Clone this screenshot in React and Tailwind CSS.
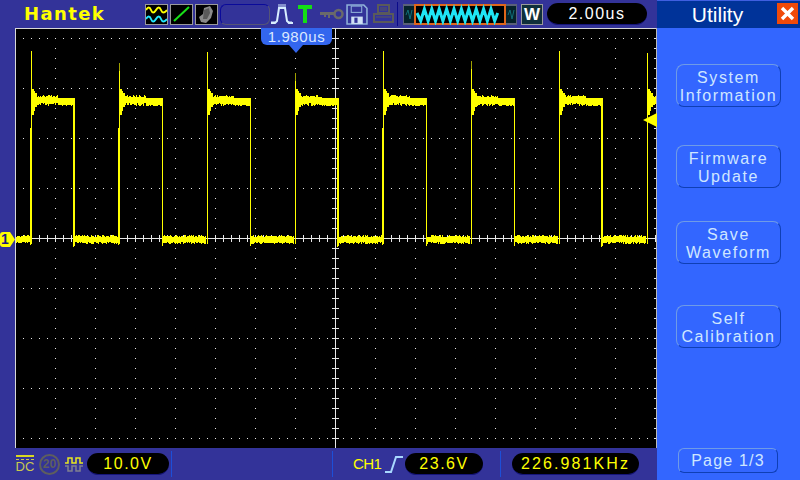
import React from 'react';

const seed = (n) => {
  const s = Math.sin(n * 12.9898) * 43758.5453;
  return s - Math.floor(s);
};

const rises = [31, 119, 207, 295, 383, 471, 559, 647];
const spikeTops = [51, 63, 52, 73, 51, 61, 51, 53];

const Graticule = () => {
  const dots = [];
  for (let y = 38; y < 448; y += 50) {
    for (let x = 23; x < 656; x += 8) dots.push(<rect key={`h${x}-${y}`} x={x} y={y} width="1" height="1" fill="#e8e8e8" />);
  }
  for (let x = 55; x < 656; x += 40) {
    for (let y = 48; y < 448; y += 10) dots.push(<rect key={`v${x}-${y}`} x={x} y={y} width="1" height="1" fill="#e8e8e8" />);
  }
  for (let y = 38; y < 448; y += 10) {
    dots.push(<rect key={`t${y}`} x="332" y={y} width="7" height="1" fill="#e8e8e8" />);
    dots.push(<rect key={`r${y}`} x="654" y={y} width="2" height="1" fill="#e8e8e8" />);
  }
  for (let x = 23; x < 656; x += 8) {
    dots.push(<rect key={`c${x}`} x={x} y="235" width="1" height="7" fill="#e8e8e8" />);
  }
  return (
    <>
      {dots}
      <rect x="16" y="238" width="640" height="1" fill="#e8e8e8" />
      <rect x="335" y="28" width="1" height="420" fill="#e8e8e8" />
    </>
  );
};

const Trace = () => {
  const cols = [];
  const col = (x, top, bottom, fill = '#ffff00') =>
    cols.push(<rect key={cols.length} x={x} y={top} width="1" height={bottom - top} fill={fill} />);

  // low level before the first edge
  for (let x = 16; x < 31; x++) col(x, 235 + Math.round(seed(x) * 2), 242 + Math.round(seed(x + 50) * 2));

  rises.forEach((r, i) => {
    col(r, spikeTops[i], 244);
    if (i === 0 || i === 1 || i === 4) col(r - 1, 128, 245);
    if (spikeTops[i] > 60) col(r, spikeTops[i], spikeTops[i] + 8, '#a0a000');
    const f = r + 43;
    const last = Math.min(f, 656);
    for (let x = r + 1; x < last; x++) {
      const d = x - r;
      let top = 95 + Math.round(seed(x) * 2);
      let bottom = 103 + Math.round(seed(x + 7) * 3);
      if (d < 3) { top = 89; bottom = 115; }
      else if (d < 4) { top = 91; bottom = 111; }
      else if (d < 6) { top = 93; bottom = 107; }
      else if (d > 26) { top = 98; bottom = 105 + Math.round(seed(x)); }
      col(x, top, bottom);
    }
    if (f < 656) {
      col(f, 98, 246);
      if (i % 3 === 0) col(f - 1, 98, 247);
      const next = rises[i + 1];
      for (let x = f + 1; x < next - 1; x++) {
        col(x, 235 + Math.round(seed(x) * 2), 242 + Math.round(seed(x + 3) * 2));
      }
    }
  });
  return <>{cols}</>;
};

const SoftKey = ({ top, bottom, className }) => (
  <button className={`w-[105px] h-[43px] ml-[19px] pt-[3px] flex flex-col items-center justify-center rounded-lg border border-t-[#6f9be6] border-l-[#6f9be6] border-r-[#0f3fb5] border-b-[#0f3fb5] text-[#cfe6ff] text-[16px] leading-[18px] tracking-[1.6px] font-['Liberation_Sans',sans-serif] ${className}`}>
    <span>{top}</span>
    <span>{bottom}</span>
  </button>
);

const Pill = ({ className, children }) => (
  <div className={`h-[22px] bg-black rounded-full flex items-center justify-center text-[16px] tracking-[1.5px] font-['Liberation_Sans',sans-serif] border-b border-[#15157a] ${className}`}>
    {children}
  </div>
);

const IconBox = ({ children }) => (
  <svg width="23" height="21" viewBox="0 0 21 19" className="bg-black border border-[#9a9a9a] mr-[2px]">{children}</svg>
);

const TopBar = () => (
  <div className="h-[28px] flex items-center">
    <div className="w-[130px] pl-[9px] text-[#ffff00] text-[18px] leading-none font-bold tracking-[1.4px] font-['DejaVu_Sans',sans-serif]">Hantek</div>
    <div className="flex items-center">
      <IconBox>
        <path d="M0 5q3-5 5 0t5 0 5 0 6 0" fill="none" stroke="#ffff00" strokeWidth="2" />
        <path d="M0 14q3-5 5 0t5 0 5 0 6 0" fill="none" stroke="#22e6ff" strokeWidth="2" />
      </IconBox>
      <IconBox>
        <path d="M3 16L18 2" stroke="#18e018" strokeWidth="2" />
      </IconBox>
      <IconBox>
        <path d="M3 12l4-3 1-6 6-2 3 5-2 7-5 5-5-1z" fill="#8a8a8a" />
        <path d="M8 5l5-2 1 5-3 6-4 0z" fill="#5a5a5a" />
      </IconBox>
    </div>
    <div className="w-[50px] h-[21px] rounded-md border border-t-[#0a0a9a] border-l-[#0a0a9a] border-r-[#555577] border-b-[#555577]" />
    <svg width="22" height="22" viewBox="0 0 22 22" className="ml-px">
      <path d="M0 20h4l2-2 2-13h6l2 13 2 2h4" fill="none" stroke="#d8eeff" strokeWidth="2" />
      <path d="M8 1v4M10 1v4M12 1v4M14 1v4M1 18v3M3 18v3M18 18v3M20 18v3" stroke="#d8eeff" strokeWidth="1" />
    </svg>
    <svg width="14" height="20" viewBox="0 0 14 20" className="ml-[5px]">
      <path d="M0 1h14v4H9v14H5V5H0z" fill="#14e014" />
    </svg>
    <svg width="24" height="12" viewBox="0 0 24 12" className="ml-[8px]">
      <circle cx="18.5" cy="6" r="4" fill="none" stroke="#6a6a6a" strokeWidth="2.5" />
      <path d="M0 4h15v3H10v3H8V7H6v2H4V7H0z" fill="#6a6a6a" />
    </svg>
    <svg width="22" height="21" viewBox="0 0 21 20" className="ml-[2px]">
      <path d="M1 1h16l3 3v15H1z" fill="none" stroke="#8fb0d8" strokeWidth="1.5" />
      <rect x="5" y="2" width="10" height="6" fill="#333399" stroke="#8fb0d8" />
      <rect x="5" y="12" width="11" height="7" fill="#cfe0f5" />
      <rect x="8" y="13" width="3" height="5" fill="#333399" />
    </svg>
    <svg width="23" height="20" viewBox="0 0 21 20" className="ml-[4px]">
      <path d="M5 1h11v8H5z" fill="none" stroke="#5a5a5a" strokeWidth="2" />
      <path d="M7 4h7M7 6h7" stroke="#5a5a5a" />
      <path d="M1 10h19v8H1z" fill="none" stroke="#5a5a5a" strokeWidth="2" />
      <path d="M3 13h15" stroke="#5a5a5a" />
    </svg>
    <div className="w-px h-[24px] ml-[2px] bg-[#0a0a8a]" />
    <div className="ml-[5px] h-[21px] w-[114px] flex items-center bg-[#5a6078]">
      <svg width="114" height="21" viewBox="0 0 114 21">
        <rect x="1" y="2" width="112" height="17" fill="#06222a" />
        <path d="M3 11l2-5 2 9 2-9" fill="none" stroke="#0f6f78" />
        <path d="M105 11l2-5 2 9 2-9" fill="none" stroke="#0f6f78" />
        <rect x="12" y="1" width="90" height="19" fill="#000" stroke="#e0661a" strokeWidth="2" />
        <path d="M14 9l3.7 8 3.7-12 3.7 12 3.7-12 3.7 12 3.7-12 3.7 12 3.7-12 3.7 12 3.7-12 3.7 12 3.7-12 3.7 12 3.7-12 3.7 12 3.7-12 3.7 12 3.7-12 3.7 12 3.7-12 3.7 12 3-8" fill="none" stroke="#1fe6f5" strokeWidth="3" />
      </svg>
    </div>
    <div className="ml-[4px] w-[22px] h-[21px] bg-[#10303a] border border-[#9a9a9a] flex items-center justify-center text-white text-[17px] font-bold leading-none font-['Liberation_Sans',sans-serif]">W</div>
    <Pill className="ml-[4px] w-[100px] text-white">2.00us</Pill>
  </div>
);

const BottomBar = () => (
  <div className="h-[32px] flex items-center text-[#ffff00]">
    <div className="w-[18px] ml-px flex flex-col items-center">
      <div className="w-full h-[2px] bg-[#d8d820]" />
      <div className="w-full h-px mt-[2px] border-t border-dashed border-[#c8c850]" />
      <span className="text-[13px] leading-[13px] text-[#c8c850] font-['Liberation_Sans',sans-serif]">DC</span>
    </div>
    <div className="ml-[5px] w-[21px] h-[21px] rounded-full border-2 border-[#5e5e5e] flex items-center justify-center text-[#5e5e5e] text-[12px] font-bold leading-none font-['Liberation_Sans',sans-serif]">20</div>
    <svg width="18" height="17" viewBox="0 0 18 17" className="ml-[5px]">
      <path d="M0 7h3V2h4v5h4V2h4v5h3" fill="none" stroke="#e8e820" strokeWidth="1.5" />
      <path d="M0 10h3v5h4v-5h4v5h4v-5h3" fill="none" stroke="#808090" strokeWidth="1.5" />
    </svg>
    <Pill className="ml-[4px] w-[82px]">10.0V</Pill>
    <div className="w-px h-[26px] ml-[2px] bg-[#1d4fd8]" />
    <div className="w-px h-[26px] ml-[160px] bg-[#1d4fd8]" />
    <span className="ml-[20px] w-[28px] text-[15px] tracking-[-0.6px] font-['Liberation_Sans',sans-serif]">CH1</span>
    <svg width="18" height="20" viewBox="0 0 18 20" className="ml-[4px]">
      <path d="M0 18h6l5-15h7" fill="none" stroke="#a8d8ff" strokeWidth="2" />
    </svg>
    <Pill className="ml-[2px] w-[78px]">23.6V</Pill>
    <div className="w-px h-[26px] ml-[17px] bg-[#1d4fd8]" />
    <Pill className="ml-[11px] w-[127px] tracking-[2.1px]">226.981KHz</Pill>
  </div>
);

export default function App() {
  return (
    <div className="w-[800px] h-[480px] flex bg-[#333399] overflow-hidden">
      <div className="w-[657px] pl-[15px] flex flex-col">
        <TopBar />
        <div className="relative w-[642px] h-[420px]">
          <svg width="642" height="420" viewBox="15 28 642 420" shapeRendering="crispEdges" className="block bg-black">
            <Graticule />
            <Trace />
            <rect x="15" y="28" width="642" height="1" fill="#d8d8d8" />
            <rect x="15" y="28" width="1" height="420" fill="#d8d8d8" />
            <rect x="656" y="28" width="1" height="420" fill="#b8b8b8" />
          </svg>
          <div className="absolute left-[246px] top-0 w-[71px] h-[17px] bg-[#3366ee] rounded-b-md text-[#dbe9ff] text-[15px] leading-[17px] tracking-[0.6px] text-center font-['Liberation_Sans',sans-serif]">1.980us</div>
          <svg width="14" height="8" viewBox="0 0 14 8" className="absolute left-[274px] top-[17px]">
            <path d="M0 0h14L7 8z" fill="#3366ee" />
          </svg>
          <svg width="14" height="14" viewBox="0 0 14 14" className="absolute left-[628px] top-[85px]">
            <path d="M14 0v14L0 7z" fill="#ffff00" />
          </svg>
          <div className="absolute -left-[15px] top-[204px] flex items-center">
            <div className="w-[10px] h-[15px] bg-[#ffff00] rounded-l-[3px] text-[#1a1a80] text-[14px] font-bold leading-[15px] text-center font-['Liberation_Sans',sans-serif]">1</div>
            <svg width="5" height="15" viewBox="0 0 5 15"><path d="M0 0l5 7.5-5 7.5z" fill="#ffff00" /></svg>
          </div>
        </div>
        <BottomBar />
      </div>
      <div className="w-[143px] flex flex-col bg-[#3366ff]">
        <div className="relative h-[28px] bg-[#003399] border-t border-[#3f5fe0] flex items-center justify-center text-white text-[21px] pr-[22px] font-['Liberation_Sans',sans-serif]">
          Utility
          <div className="absolute left-[120px] top-[2px] w-[21px] h-[21px] bg-[#f04a0a] flex items-center justify-center">
            <svg width="15" height="15" viewBox="0 0 15 15"><path d="M2 2l11 11M13 2L2 13" stroke="#fff" strokeWidth="3.4" /></svg>
          </div>
        </div>
        <SoftKey top="System" bottom="Information" className="mt-[36px]" />
        <SoftKey top="Firmware" bottom="Update" className="mt-[38px]" />
        <SoftKey top="Save" bottom="Waveform" className="mt-[33px]" />
        <SoftKey top="Self" bottom="Calibration" className="mt-[41px]" />
        <button className="w-[100px] h-[25px] ml-[21px] mt-[100px] rounded-md border border-t-[#6f9be6] border-l-[#6f9be6] border-r-[#0f3fb5] border-b-[#0f3fb5] text-[#cfe6ff] text-[16px] tracking-[1.2px] font-['Liberation_Sans',sans-serif]">
          Page 1/3
        </button>
      </div>
    </div>
  );
}
